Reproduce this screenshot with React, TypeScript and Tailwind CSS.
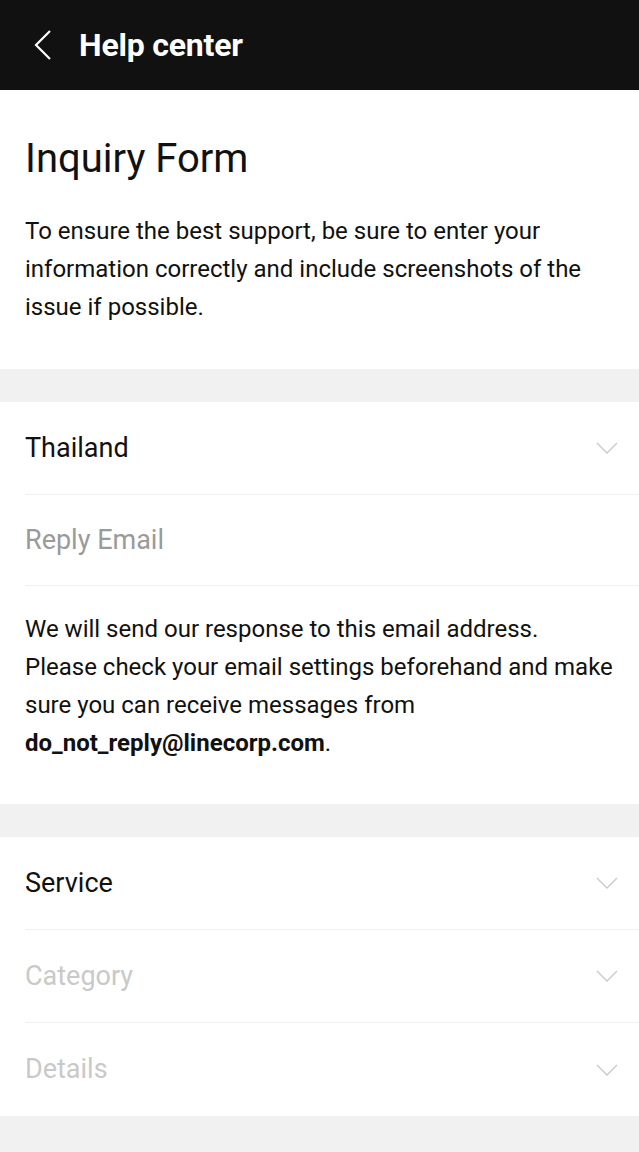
import React from 'react';

const Chevron = () => (
  <svg width="22" height="12" viewBox="0 0 22 12" fill="none" className="shrink-0">
    <path d="M1 1l10 10L21 1" stroke="#c8c8c8" strokeWidth="1.3" />
  </svg>
);

const SelectRow = ({ label, muted, last }: { label: string; muted?: boolean; last?: boolean }) => (
  <div className="pl-[25px]">
    <div className={`flex items-center justify-between h-[93px] pr-[21px] ${last ? '' : 'border-b border-[#efefef]'}`}>
      <span className={`text-[27px] ${muted ? 'text-[#c9c9c9]' : 'text-[#111]'}`}>{label}</span>
      <Chevron />
    </div>
  </div>
);

export default function App() {
  return (
    <div className="min-h-screen bg-[#f1f1f1]" style={{ fontFamily: 'Roboto, "Liberation Sans", sans-serif' }}>
      <header className="h-[90px] bg-[#111] flex items-center pl-[33px] gap-[26px]">
        <svg width="20" height="32" viewBox="0 0 20 32" fill="none">
          <path d="M17 2L3 16l14 14" stroke="#fff" strokeWidth="2.2" />
        </svg>
        <h1 className="text-white text-[32px] font-bold tracking-[-0.2px]">Help center</h1>
      </header>

      <section className="bg-white px-[25px] pt-[45px] pb-[43px]">
        <h2 className="text-[40px] leading-[48px] text-[#111]">Inquiry Form</h2>
        <p className="mt-[29px] text-[24px] leading-[38px] text-[#111]">
          To ensure the best support, be sure to enter your information correctly and include screenshots of the issue if possible.
        </p>
      </section>

      <section className="bg-white mt-[33px]">
        <SelectRow label="Thailand" />
        <div className="pl-[25px]">
          <div className="h-[91px] flex items-center border-b border-[#efefef]">
            <span className="text-[27px] text-[#9a9a9a]">Reply Email</span>
          </div>
        </div>
        <p className="px-[25px] pt-[24px] pb-[42px] text-[24px] leading-[38px] text-[#111]">
          We will send our response to this email address.
          <br />
          Please check your email settings beforehand and make sure you can receive messages from{' '}
          <span className="font-bold">do_not_reply@linecorp.com</span>.
        </p>
      </section>

      <section className="bg-white mt-[33px]">
        <SelectRow label="Service" />
        <SelectRow label="Category" muted />
        <SelectRow label="Details" muted last />
      </section>
    </div>
  );
}
